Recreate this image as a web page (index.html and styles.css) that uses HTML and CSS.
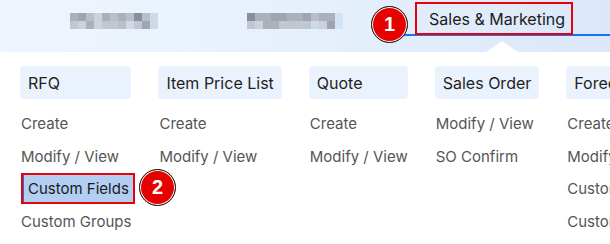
FILE: index.html
```html
<!DOCTYPE html>
<html lang="en">
<head>
<meta charset="utf-8">
<title>Sales &amp; Marketing menu</title>
<link rel="stylesheet" href="styles.css">
</head>
<body>
<header class="topbar">
  <div class="mosaic mosaic-a">
    <span class="c3"></span><span class="c2"></span><span class="c4"></span><span class="c6"></span><span class="c3"></span><span class="c4"></span><span class="c3"></span><span class="c4"></span><span class="c1"></span><span class="c4"></span><span class="c7"></span>
    <span class="c5"></span><span class="c6"></span><span class="c3"></span><span class="c6"></span><span class="c5"></span><span class="c5"></span><span class="c4"></span><span class="c7"></span><span class="c5"></span><span class="c2"></span><span class="c7"></span>
  </div>
  <div class="mosaic mosaic-b">
    <span class="c1"></span><span class="c3"></span><span class="c3"></span><span class="c2"></span><span class="c2"></span><span class="c3"></span><span class="c3"></span><span class="c2"></span><span class="c4"></span><span class="c3"></span><span class="c3"></span><span class="c8"></span>
    <span class="c5"></span><span class="c6"></span><span class="c3"></span><span class="c3"></span><span class="c5"></span><span class="c5"></span><span class="c5"></span><span class="c5"></span><span class="c7"></span><span class="c6"></span><span class="c2"></span><span class="c8"></span>
  </div>
  <div class="active-zone">
    <div class="tab">Sales &amp; Marketing</div>
  </div>
  <span class="badge badge-1">1</span>
  <span class="caret"></span>
</header>

<main class="menu">
  <section class="col">
    <div class="col-head">RFQ</div>
    <a class="item">Create</a>
    <a class="item">Modify / View</a>
    <a class="item item-active"><span class="hl">Custom Fields</span><span class="badge badge-2">2</span></a>
    <a class="item">Custom Groups</a>
  </section>
  <section class="col">
    <div class="col-head">Item Price List</div>
    <a class="item">Create</a>
    <a class="item">Modify / View</a>
  </section>
  <section class="col">
    <div class="col-head">Quote</div>
    <a class="item">Create</a>
    <a class="item">Modify / View</a>
  </section>
  <section class="col">
    <div class="col-head">Sales Order</div>
    <a class="item">Modify / View</a>
    <a class="item">SO Confirm</a>
  </section>
  <section class="col">
    <div class="col-head">Forecast</div>
    <a class="item">Create</a>
    <a class="item">Modify / View</a>
    <a class="item">Custom Fields</a>
    <a class="item">Custom Groups</a>
  </section>
</main>
</body>
</html>
```

FILE: styles.css
```css
* { box-sizing: border-box; }

html, body {
  margin: 0;
  padding: 0;
  width: 610px;
  height: 244px;
  overflow: hidden;
  background: #ffffff;
  font-family: Inter, "Noto Sans", "Liberation Sans", sans-serif;
}

.topbar {
  position: relative;
  height: 52px;
  display: flex;
  align-items: flex-start;
  padding-left: 70px;
  background: linear-gradient(90deg, #eff5fe 0%, #e6f0fc 50%, #dbe8fa 100%);
}

.mosaic {
  display: grid;
  grid-auto-flow: row;
  grid-template-rows: 8px 8px;
  margin-top: 13px;
  opacity: 0.95;
}
.mosaic-a { grid-template-columns: repeat(11, 8px); width: 88px; }
.mosaic-b { grid-template-columns: repeat(12, 8px); width: 96px; margin-left: 89px; }

.c1 { background: #848a95; }
.c2 { background: #9ca2ac; }
.c3 { background: #a8adb6; }
.c4 { background: #b8bcc4; }
.c5 { background: #bfc5ce; }
.c6 { background: #c8d1dd; }
.c7 { background: #ccd8e6; }
.c8 { background: #d4e3f6; }

.active-zone {
  flex: 1;
  margin-left: 61px;
  height: 36px;
  border-bottom: 2px solid #1a73e8;
  display: flex;
  padding-left: 11px;
}

.tab {
  margin-top: 2px;
  height: 33px;
  padding: 0 0 0 12px;
  width: 158px;
  border: 2.5px solid #e8000b;
  display: flex;
  align-items: center;
  font-size: 16px;
  color: #1c1c1c;
  white-space: nowrap;
}

.caret {
  position: absolute;
  left: 486px;
  bottom: 0;
  width: 0;
  height: 0;
  border-left: 16px solid transparent;
  border-right: 16px solid transparent;
  border-bottom: 11px solid #ffffff;
}

.badge {
  position: absolute;
  width: 37px;
  height: 37px;
  border-radius: 50%;
  background: #e60000;
  border: 1px solid #1a1a1a;
  box-shadow: inset 0 0 0 1px #ffffff;
  color: #ffffff;
  font-family: "Liberation Sans", Arial, sans-serif;
  font-weight: bold;
  font-size: 20px;
  display: flex;
  align-items: center;
  justify-content: center;
}
.badge-1 { left: 371px; top: 6px; }

.menu {
  display: flex;
  gap: 27px;
  padding: 14px 0 0 20px;
  white-space: nowrap;
}

.col {
  display: flex;
  flex-direction: column;
  flex: none;
}

.col-head {
  height: 33px;
  padding: 0 8px;
  display: flex;
  align-items: center;
  background: #eaf2fd;
  border-radius: 4px;
  font-size: 16px;
  color: #1f1f1f;
  margin-bottom: 8px;
}

.item {
  height: 32.7px;
  display: flex;
  align-items: center;
  padding-left: 1px;
  font-size: 15px;
  color: #555555;
  cursor: pointer;
}

.item-active {
  position: relative;
}

.hl {
  display: flex;
  align-items: center;
  height: 31px;
  width: 114px;
  margin-right: -5px;
  padding-left: 5px;
  background: #b2cff2;
  color: #1a1a1a;
  border: 2px solid #e8000b;
  box-shadow: inset 1px 0 0 #1a73e8;
}

.badge-2 { left: 119px; top: -3px; }
```
